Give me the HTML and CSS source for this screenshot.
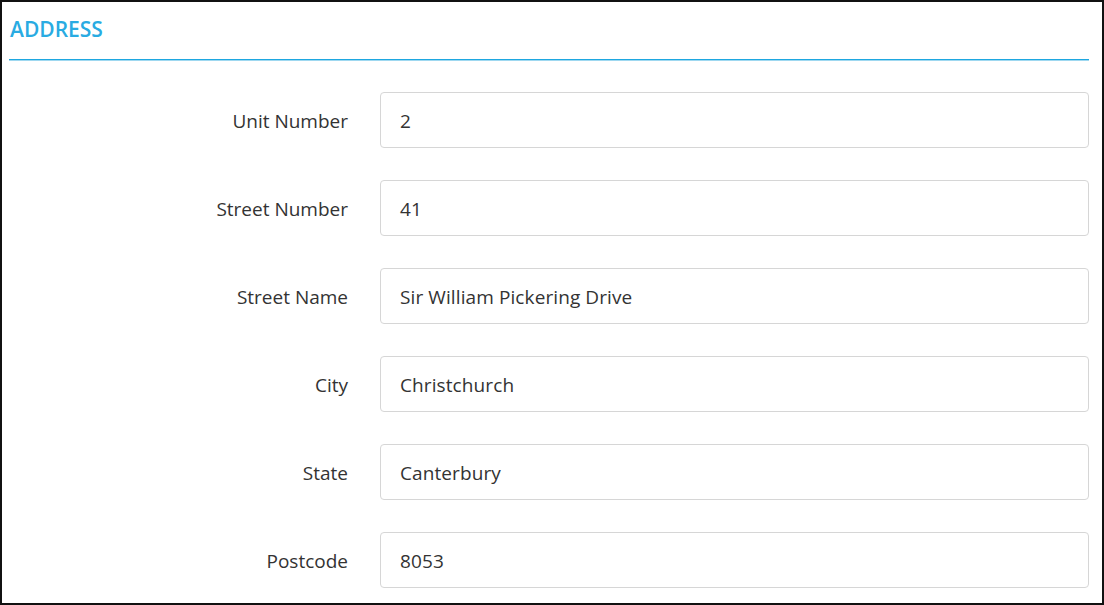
FILE: index.html
```html
<!DOCTYPE html>
<html>
<head>
<meta charset="utf-8">
<link rel="stylesheet" href="styles.css">
</head>
<body>
<div class="frame">
  <div class="section">
    <h2 class="title">ADDRESS</h2>
    <div class="rule"></div>
    <div class="form">
      <div class="row"><label class="label">Unit Number</label><div class="input">2</div></div>
      <div class="row"><label class="label">Street Number</label><div class="input">41</div></div>
      <div class="row"><label class="label">Street Name</label><div class="input">Sir William Pickering Drive</div></div>
      <div class="row"><label class="label">City</label><div class="input">Christchurch</div></div>
      <div class="row"><label class="label">State</label><div class="input">Canterbury</div></div>
      <div class="row"><label class="label">Postcode</label><div class="input">8053</div></div>
    </div>
  </div>
</div>
</body>
</html>
```

FILE: styles.css
```css
html, body {
  margin: 0;
  padding: 0;
  background: #fff;
}
.frame {
  box-sizing: border-box;
  width: 1104px;
  height: 605px;
  border: 2px solid #111;
  overflow: hidden;
  font-family: "Open Sans", "Noto Sans", sans-serif;
  color: #333;
}
.section {
  width: 1080px;
  padding-left: 7px;
}
.title {
  margin: 0;
  padding: 11px 0 14px 1px;
  height: 32px;
  line-height: 32px;
  font-size: 21px;
  font-weight: 600;
  color: #29abe2;
}
.rule {
  height: 2px;
  margin-bottom: -1px;
  background: linear-gradient(#1ea7e0 0 50%, #9fd8f0 50% 100%);
}
.form {
  display: flex;
  flex-direction: column;
  gap: 32px;
  padding-top: 32px;
}
.row {
  display: flex;
  align-items: center;
  gap: 32px;
}
.label {
  width: 339px;
  text-align: right;
  font-size: 19px;
  line-height: 26px;
  padding-top: 2px;
  color: #333;
}
.input {
  box-sizing: border-box;
  flex: 1;
  height: 56px;
  border: 1px solid #d6d6d6;
  border-radius: 4px;
  padding: 2px 19px 0;
  display: flex;
  align-items: center;
  font-size: 19px;
  letter-spacing: 0.1px;
  color: #333;
}
```
